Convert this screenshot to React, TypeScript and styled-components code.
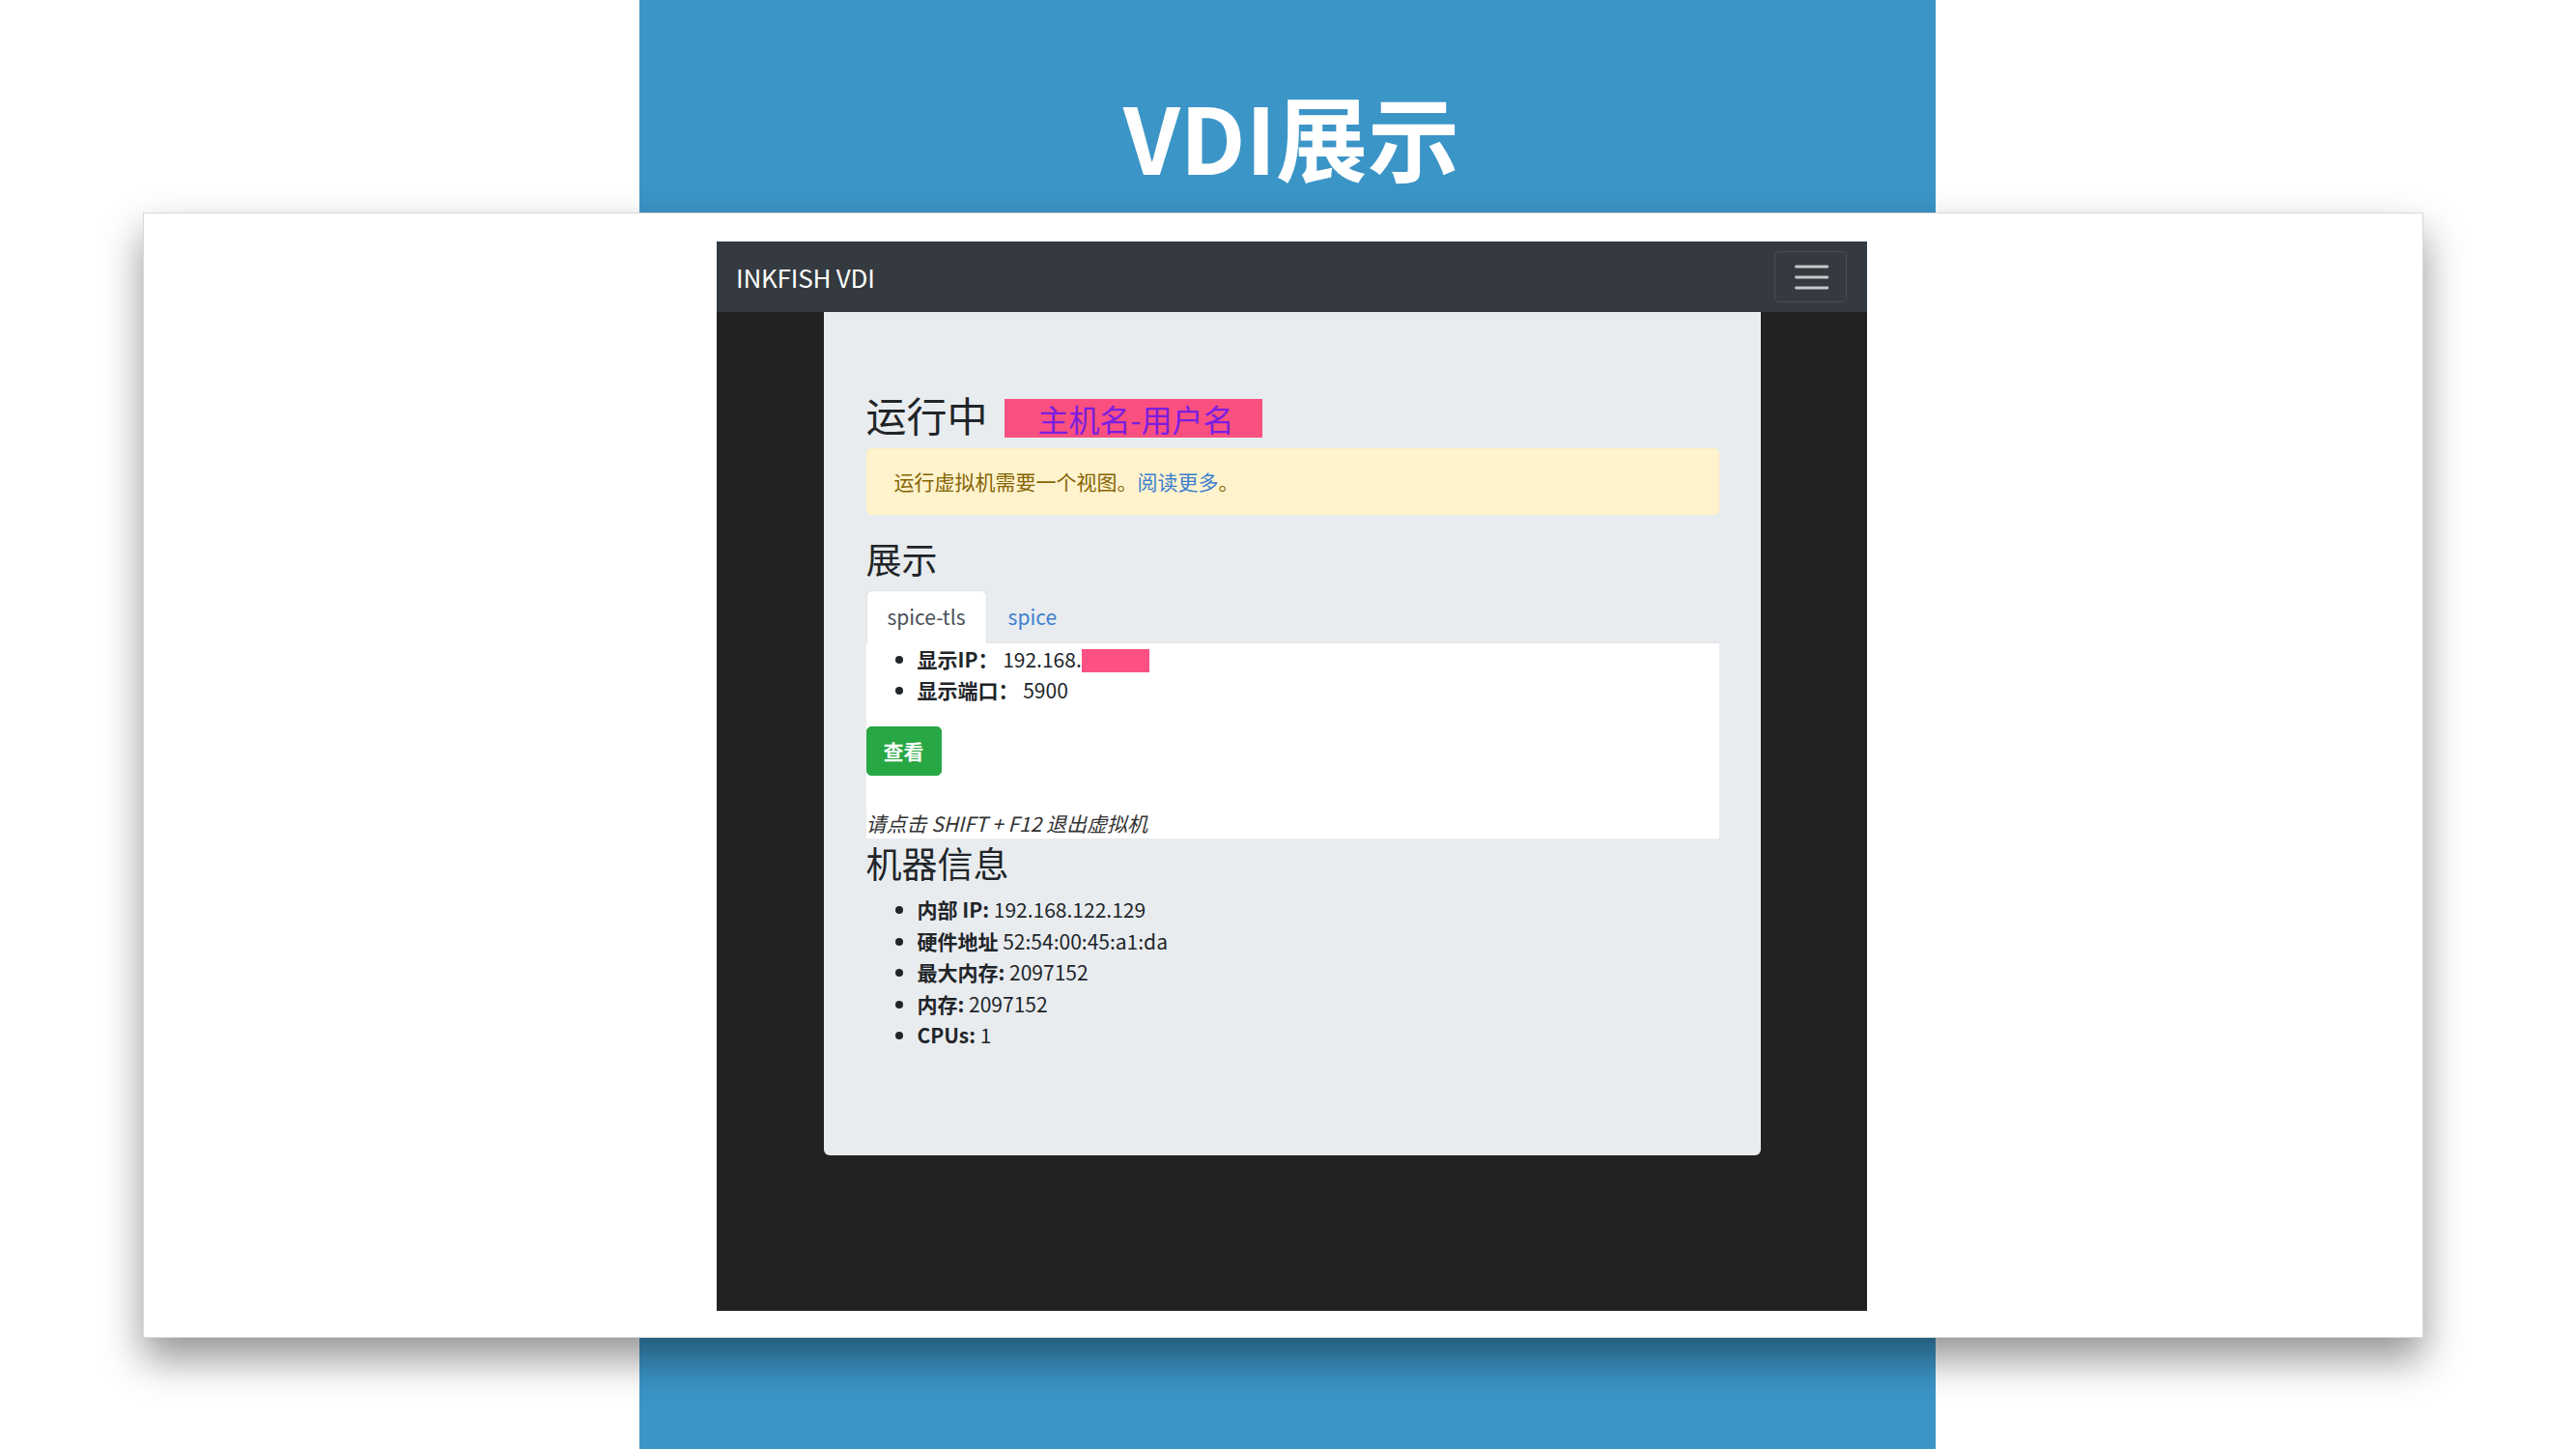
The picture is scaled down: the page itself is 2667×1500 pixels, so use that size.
import React from "react";
import styled, { createGlobalStyle } from "styled-components";

const GlobalStyle = createGlobalStyle`
  html, body {
    margin: 0;
    padding: 0;
    background: #ffffff;
  }
  body {
    font-family: "Noto Sans CJK SC", "Noto Sans", sans-serif;
    color: #212529;
  }
  * { box-sizing: border-box; }
`;

const Slide = styled.div`
  display: grid;
  width: 2667px;
  height: 1500px;
  grid-template-columns: 148px 514px 1342px 505px 158px;
  grid-template-rows: 220px 1165px 115px;
  background: #ffffff;
  overflow: hidden;
`;

const BlueBand = styled.div`
  grid-column: 3;
  grid-row: 1 / 4;
  background: #3b95c7;
  display: flex;
  justify-content: center;
  align-items: flex-start;
`;

const SlideTitle = styled.h1`
  margin: 0;
  padding-top: 92px;
  padding-left: 8px;
  font-family: "Noto Sans CJK SC", sans-serif;
  font-weight: 700;
  font-size: 95px;
  line-height: 1;
  color: #ffffff;
`;

const Card = styled.div`
  grid-column: 2 / 5;
  grid-row: 2;
  position: relative;
  z-index: 1;
  background: #ffffff;
  border: 1px solid #d8d8d8;
  box-shadow: 0 22px 40px rgba(0, 0, 0, 0.42);
  padding: 29px 0 0 593px;
`;

const Screen = styled.div`
  width: 1191px;
  height: 1107px;
  background: #222222;
  display: flex;
  flex-direction: column;
`;

const Navbar = styled.nav`
  height: 73px;
  flex: none;
  background: #343a40;
  display: flex;
  align-items: center;
  justify-content: space-between;
  padding: 0 21px 0 20px;
`;

const Brand = styled.span`
  color: #ffffff;
  font-size: 26px;
  line-height: 1;
  letter-spacing: -0.2px;
`;

const Toggler = styled.button`
  width: 75px;
  height: 53px;
  background: transparent;
  border: 1px solid rgba(255, 255, 255, 0.1);
  border-radius: 5px;
  display: flex;
  align-items: center;
  justify-content: center;
  padding: 0;
`;

const Main = styled.div`
  flex: 1;
  display: flex;
  justify-content: center;
  align-items: flex-start;
`;

const Jumbotron = styled.div`
  width: 970px;
  background: #e9ecef;
  border-radius: 0 0 6px 6px;
  padding: 81px 43px 87px 44px;
`;

const PageTitle = styled.h2`
  margin: 0 0 10px;
  font-size: 42px;
  font-weight: 400;
  line-height: 50px;
  color: #212529;
  white-space: nowrap;
`;

const Redacted = styled.span`
  display: inline-block;
  margin-left: 17px;
  padding: 0 29px 0 35px;
  height: 40px;
  line-height: 40px;
  font-size: 32px;
  background: #f9507f;
  color: #7a1de0;
`;

const Alert = styled.div`
  background: #fff3cd;
  border: 1px solid #ffeeba;
  border-radius: 5px;
  color: #856404;
  font-size: 21px;
  line-height: 31px;
  padding: 18px 28px;
  margin-bottom: 23px;
`;

const Link = styled.a`
  color: #3b7fd0;
  text-decoration: none;
`;

const SectionTitle = styled.h3<{ $top?: number; $bottom?: number }>`
  margin: ${(p) => p.$top ?? 0}px 0 ${(p) => p.$bottom ?? 11}px;
  font-size: 37px;
  font-weight: 400;
  line-height: 44px;
  color: #212529;
`;

const Tabs = styled.div`
  display: flex;
  border-bottom: 1px solid #dee2e6;
`;

const Tab = styled.a<{ $active?: boolean }>`
  display: block;
  font-size: 21px;
  line-height: 31px;
  padding: 11px 21px;
  margin-bottom: -1px;
  border: 1px solid ${(p) => (p.$active ? "#dee2e6" : "transparent")};
  border-bottom-color: ${(p) => (p.$active ? "#ffffff" : "transparent")};
  border-radius: 6px 6px 0 0;
  background: ${(p) => (p.$active ? "#ffffff" : "transparent")};
  color: ${(p) => (p.$active ? "#495057" : "#3b7fd0")};
  text-decoration: none;
`;

const TabPane = styled.div`
  background: #ffffff;
`;

const InfoList = styled.ul<{ $line: number; $gap: number }>`
  margin: 0 0 ${(p) => p.$gap}px;
  padding-left: 53px;
  font-size: 21px;
  line-height: ${(p) => p.$line}px;
  color: #212529;
`;

const Label = styled.b`
  font-weight: 700;
`;

const MaskBlock = styled.span`
  display: inline-block;
  width: 70px;
  height: 24px;
  background: #fc5182;
  vertical-align: -5px;
`;

const ViewButton = styled.button`
  display: inline-block;
  font-family: inherit;
  font-size: 21px;
  line-height: 31px;
  font-weight: 700;
  color: #ffffff;
  background: #28a745;
  border: 1px solid #28a745;
  border-radius: 5px;
  padding: 9px 17px;
`;

const Hint = styled.p`
  margin: 33px 0 0;
  font-size: 21px;
  line-height: 32px;
  font-style: italic;
  color: #333333;
`;

function TogglerIcon() {
  return (
    <svg width="44" height="44" viewBox="0 0 30 30" aria-hidden="true">
      <path
        d="M4.5 7.5h22M4.5 15h22M4.5 22.5h22"
        stroke="rgba(255,255,255,0.72)"
        strokeWidth="2"
        strokeLinecap="round"
        fill="none"
      />
    </svg>
  );
}

export default function App() {
  return (
    <>
      <GlobalStyle />
      <Slide>
        <BlueBand>
          <SlideTitle>VDI展示</SlideTitle>
        </BlueBand>
        <Card>
          <Screen>
            <Navbar>
              <Brand>INKFISH VDI</Brand>
              <Toggler aria-label="toggle navigation">
                <TogglerIcon />
              </Toggler>
            </Navbar>
            <Main>
              <Jumbotron>
                <PageTitle>
                  运行中
                  <Redacted>主机名-用户名</Redacted>
                </PageTitle>
                <Alert>
                  运行虚拟机需要一个视图。<Link href="#">阅读更多</Link>。
                </Alert>
                <SectionTitle>展示</SectionTitle>
                <Tabs>
                  <Tab $active>spice-tls</Tab>
                  <Tab>spice</Tab>
                </Tabs>
                <TabPane>
                  <InfoList $line={32} $gap={22}>
                    <li>
                      <Label>显示IP：</Label> 192.168.
                      <MaskBlock />
                    </li>
                    <li>
                      <Label>显示端口：</Label> 5900
                    </li>
                  </InfoList>
                  <ViewButton>查看</ViewButton>
                  <Hint>请点击 SHIFT + F12 退出虚拟机</Hint>
                </TabPane>
                <SectionTitle $top={3} $bottom={10}>
                  机器信息
                </SectionTitle>
                <InfoList $line={32.5} $gap={21}>
                  <li>
                    <Label>内部 IP:</Label> 192.168.122.129
                  </li>
                  <li>
                    <Label>硬件地址</Label> 52:54:00:45:a1:da
                  </li>
                  <li>
                    <Label>最大内存:</Label> 2097152
                  </li>
                  <li>
                    <Label>内存:</Label> 2097152
                  </li>
                  <li>
                    <Label>CPUs:</Label> 1
                  </li>
                </InfoList>
              </Jumbotron>
            </Main>
          </Screen>
        </Card>
      </Slide>
    </>
  );
}
